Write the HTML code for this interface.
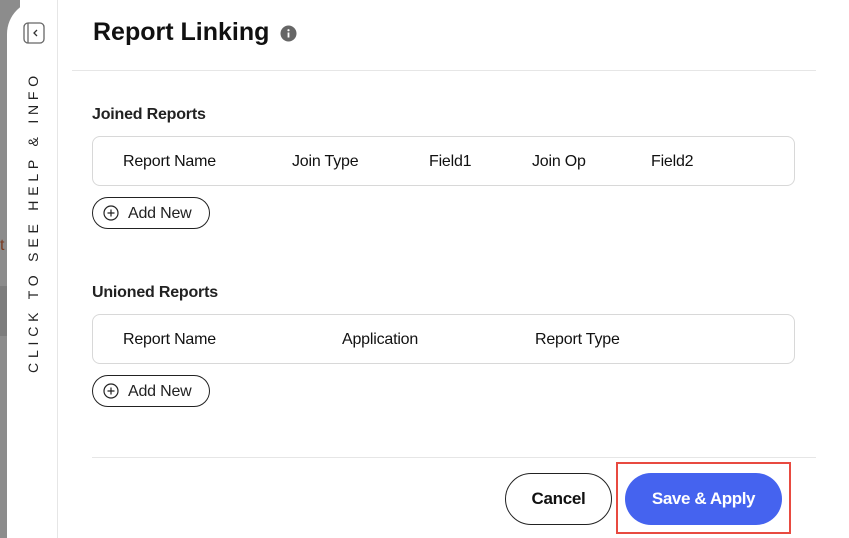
<!DOCTYPE html>
<html><head><style>
*{margin:0;padding:0;box-sizing:border-box}
body{width:849px;height:538px;overflow:hidden;background:#fff;font-family:"Liberation Sans",Arial,sans-serif;color:#111;position:relative}
.abs{position:absolute}
.bg{left:0;top:0;width:20px;height:538px;background:#8c8c8c}
.side{left:7px;top:0;width:51px;height:538px;background:#fff;border-top-left-radius:34px;border-right:1px solid #e6e6e6}
.vt{left:33px;top:222px;transform:translate(-50%,-50%) rotate(-90deg);white-space:nowrap;font-size:14px;letter-spacing:4.8px;color:#222}
.line{background:#e6e6e6;height:1px}
.box{border:1px solid #d8d8d8;border-radius:8px;background:#fff}
.th{font-size:16px;color:#111;letter-spacing:-0.2px}
.add{border:1px solid #222;border-radius:17px;font-size:16px;display:flex;align-items:center;padding-left:10px;gap:9px;color:#222;letter-spacing:-0.2px}
.h3{font-size:16px;font-weight:bold;color:#222;letter-spacing:-0.2px}
</style></head><body>
<div class="abs bg"></div>
<div class="abs" style="left:0;top:237px;font-size:16px;color:#7a3a20">t</div>
<div class="abs" style="left:0;top:286px;width:8px;height:50px;background:#7d7d7d"></div>
<div class="abs side"></div>
<svg class="abs" style="left:23px;top:22px" width="22" height="22" viewBox="0 0 22 22"><rect x="1" y="1" width="20" height="20" rx="4" fill="none" stroke="#666" stroke-width="1.3"/><line x1="5" y1="1" x2="5" y2="21" stroke="#666" stroke-width="1.3"/><path d="M14 8l-3 3 3 3" fill="none" stroke="#333" stroke-width="1.3"/></svg>
<div class="abs vt">CLICK TO SEE HELP &amp; INFO</div>
<div class="abs" style="left:93px;top:18px;font-size:25px;font-weight:bold;color:#111">Report Linking</div>
<svg class="abs" style="left:280px;top:25px" width="17" height="17"><circle cx="8.5" cy="8.5" r="8" fill="#666"/><rect x="7.6" y="7.5" width="1.8" height="5" fill="#fff"/><circle cx="8.5" cy="5.2" r="1.1" fill="#fff"/></svg>
<div class="abs line" style="left:72px;top:70px;width:744px"></div>
<div class="abs h3" style="left:92px;top:106px">Joined Reports</div>
<div class="abs box" style="left:92px;top:136px;width:703px;height:50px"></div>
<div class="abs th" style="left:123px;top:153px">Report Name</div>
<div class="abs th" style="left:292px;top:153px">Join Type</div>
<div class="abs th" style="left:429px;top:153px">Field1</div>
<div class="abs th" style="left:532px;top:153px">Join Op</div>
<div class="abs th" style="left:651px;top:153px">Field2</div>
<div class="abs add" style="left:92px;top:197px;width:118px;height:32px"><svg width="16" height="16"><circle cx="8" cy="8" r="7" fill="none" stroke="#222" stroke-width="1.2"/><path d="M8 4.5v7M4.5 8h7" stroke="#222" stroke-width="1.2"/></svg><span style="position:relative;top:1px">Add New</span></div>
<div class="abs h3" style="left:92px;top:284px">Unioned Reports</div>
<div class="abs box" style="left:92px;top:314px;width:703px;height:50px"></div>
<div class="abs th" style="left:123px;top:331px">Report Name</div>
<div class="abs th" style="left:342px;top:331px">Application</div>
<div class="abs th" style="left:535px;top:331px">Report Type</div>
<div class="abs add" style="left:92px;top:375px;width:118px;height:32px"><svg width="16" height="16"><circle cx="8" cy="8" r="7" fill="none" stroke="#222" stroke-width="1.2"/><path d="M8 4.5v7M4.5 8h7" stroke="#222" stroke-width="1.2"/></svg><span style="position:relative;top:1px">Add New</span></div>
<div class="abs line" style="left:92px;top:457px;width:724px"></div>
<div class="abs" style="left:505px;top:473px;width:107px;height:52px;border:1px solid #222;border-radius:26px;display:flex;align-items:center;justify-content:center;font-size:17px;font-weight:bold;color:#111;letter-spacing:-0.3px">Cancel</div>
<div class="abs" style="left:616px;top:462px;width:175px;height:72px;border:2px solid #e84a40"></div>
<div class="abs" style="left:625px;top:473px;width:157px;height:52px;background:#4563ef;border-radius:26px;display:flex;align-items:center;justify-content:center;font-size:17px;font-weight:bold;color:#fff;letter-spacing:-0.4px">Save &amp; Apply</div>
</body></html>
